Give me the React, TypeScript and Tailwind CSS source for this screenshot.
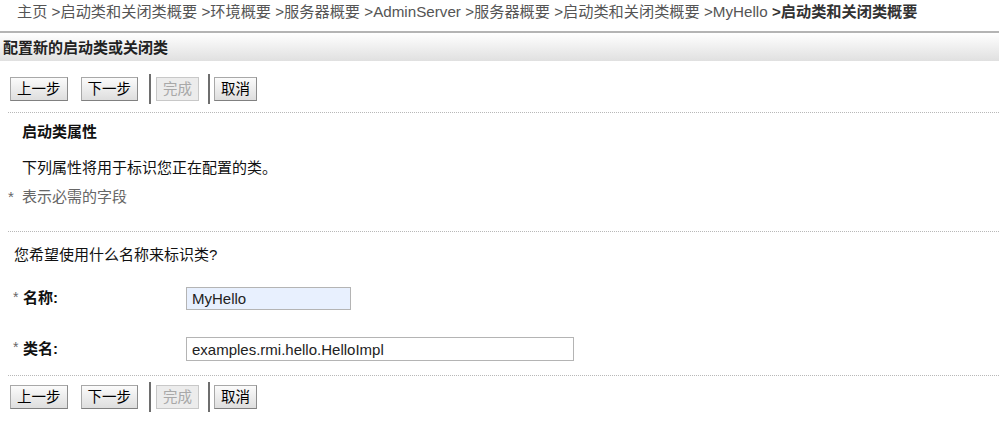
import React from 'react';

const crumbs = ['主页', '启动类和关闭类概要', '环境概要', '服务器概要', 'AdminServer', '服务器概要', '启动类和关闭类概要', 'MyHello'];

const Btn = ({ label, disabled }: { label: string; disabled?: boolean }) => (
  <button
    type="button"
    disabled={disabled}
    className={
      disabled
        ? 'h-[24px] px-[6px] border border-[#c8c8c8] bg-[#ececec] text-[#a8a8a8] text-[14.5px] leading-[22px]'
        : 'h-[24px] px-[6px] border border-[#a8a8a8] border-b-[#808080] border-r-[#8c8c8c] bg-gradient-to-b from-[#fbfbfb] to-[#dedede] text-black text-[14.5px] leading-[22px]'
    }
  >
    {label}
  </button>
);

const Sep = () => <div className="w-[2px] h-[30px] bg-[#6e6e6e]" />;

const ButtonBar = () => (
  <div className="flex items-center h-[30px] pl-[10px]">
    <Btn label="上一步" />
    <div className="w-[13px]" />
    <Btn label="下一步" />
    <div className="w-[11px]" />
    <Sep />
    <div className="w-[5px]" />
    <Btn label="完成" disabled />
    <div className="w-[9px]" />
    <Sep />
    <div className="w-[4px]" />
    <Btn label="取消" />
  </div>
);

const Dotted = ({ className = '' }: { className?: string }) => (
  <div className={`ml-[8px] border-t border-dotted border-[#b8b8b8] ${className}`} />
);

const App = () => {
  return (
    <div
      className="w-[999px] h-[433px] bg-white text-[15px] text-[#111] overflow-hidden"
      style={{ fontFamily: '"Liberation Sans", "Noto Sans CJK SC", sans-serif' }}
    >
      {/* 面包屑 */}
      <div className="h-[31px] pl-[17px] leading-[24px] text-[15.2px] text-[#555] whitespace-nowrap">
        {crumbs.map((c, i) => (
          <span key={i}>
            {i > 0 && ' >'}
            {c}
          </span>
        ))}
        <span className="font-bold text-[#333]"> &gt;启动类和关闭类概要</span>
      </div>

      {/* 标题栏 */}
      <div className="h-[30px] border-t-2 border-[#b4b4b4] bg-gradient-to-b from-white to-[#e0e0e0] pl-[3px] pt-[3px] flex items-center font-bold text-[#222]">
        配置新的启动类或关闭类
      </div>

      <div className="mt-[13px]">
        <ButtonBar />
      </div>
      <Dotted className="mt-[8px]" />

      <div className="pl-[22px] mt-[9px] leading-[20px] font-bold">启动类属性</div>
      <div className="pl-[22px] mt-[16px] leading-[20px]">下列属性将用于标识您正在配置的类。</div>
      <div className="pl-[8px] mt-[9px] leading-[20px] text-[#666] flex">
        <span className="w-[14px]">*</span>
        <span>表示必需的字段</span>
      </div>

      <Dotted className="mt-[24px]" />
      <div className="pl-[14px] mt-[13px] leading-[20px]">您希望使用什么名称来标识类?</div>

      <div className="flex items-center mt-[22px] h-[23px]">
        <div className="w-[186px] pl-[13px] flex items-center">
          <span className="text-[#666] text-[14px] w-[10px] -mt-[3px]">*</span>
          <span className="font-bold">名称:</span>
        </div>
        <input
          readOnly
          value="MyHello"
          className="w-[165px] h-[23px] border border-[#b4b4b4] bg-[#e8f0fe] px-[5px] text-[15px] text-[#222] outline-none"
        />
      </div>

      <div className="flex items-center mt-[27px] h-[24px]">
        <div className="w-[186px] pl-[13px] flex items-center">
          <span className="text-[#666] text-[14px] w-[10px] -mt-[3px]">*</span>
          <span className="font-bold">类名:</span>
        </div>
        <input
          readOnly
          value="examples.rmi.hello.HelloImpl"
          className="w-[388px] h-[24px] border border-[#b4b4b4] bg-white px-[5px] text-[15px] text-[#222] outline-none"
        />
      </div>

      <Dotted className="mt-[14px]" />
      <div className="mt-[6px]">
        <ButtonBar />
      </div>
    </div>
  );
};

export default App;
